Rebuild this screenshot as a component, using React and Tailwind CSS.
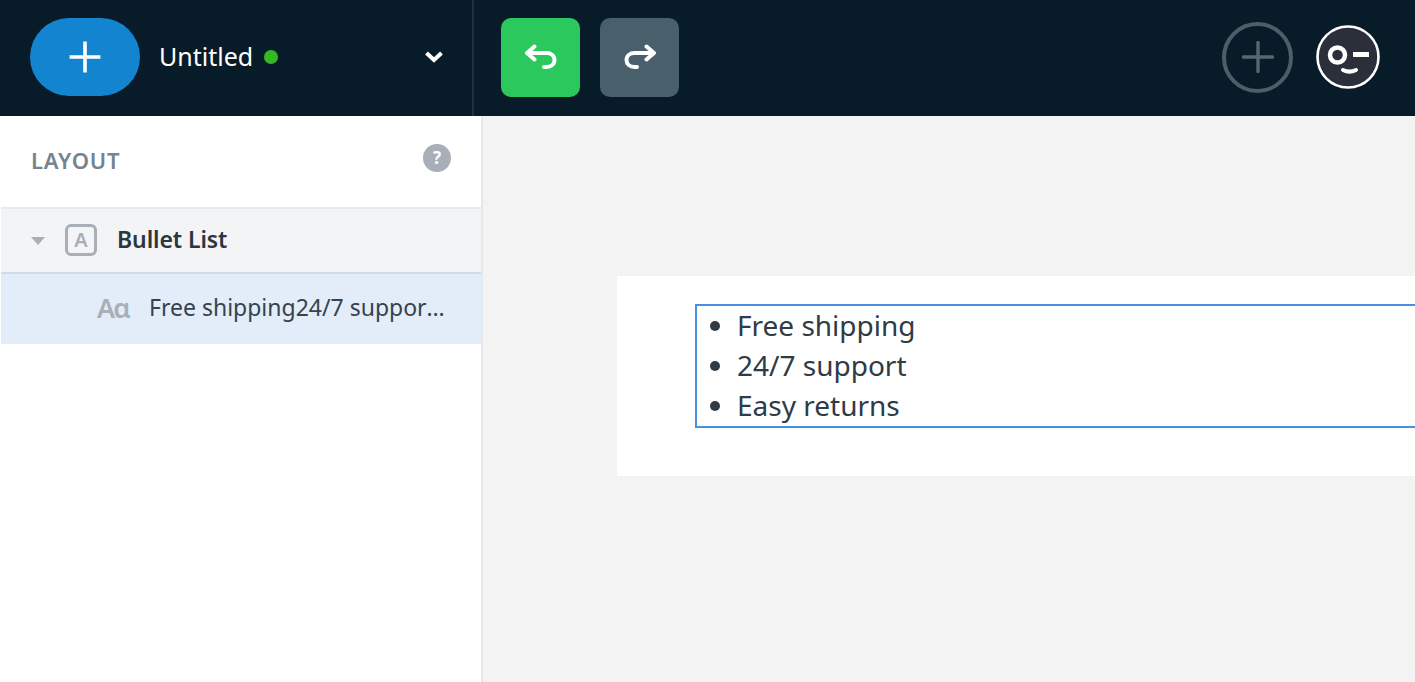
import React from "react";

function PlusIcon({ size = 34, color = "#ffffff", width = 3.4, cap = "butt" }) {
  return (
    <svg width={size} height={size} viewBox="0 0 32 32" fill="none">
      <path d="M16 1.500v29M1.500 16h29" stroke={color} strokeWidth={width} strokeLinecap={cap} />
    </svg>
  );
}

function UndoIcon({ flip }) {
  return (
    <svg
      width="34"
      height="26"
      viewBox="0 0 34 26"
      fill="none"
      className={flip ? "-scale-x-100" : ""}
    >
      <path
        d="M10.500 2.500 3 9l7.500 6.500M3.500 9h19c4.500 0 8 2.800 8 7s-3.500 7-8 7h-2.500"
        stroke="#ffffff"
        strokeWidth="4"
        strokeLinecap="round"
        strokeLinejoin="round"
      />
    </svg>
  );
}

function FaceIcon() {
  return (
    <svg width="64" height="64" viewBox="0 0 64 64" fill="none">
      <circle cx="32" cy="32" r="30.500" fill="#2a2f3a" stroke="#ffffff" strokeWidth="2.600" />
      <circle cx="21.500" cy="30" r="7.500" stroke="#ffffff" strokeWidth="4.500" />
      <path d="M37 29.500h16" stroke="#ffffff" strokeWidth="5" />
      <path d="M27 45c4 2 9 2 13 0" stroke="#ffffff" strokeWidth="4" strokeLinecap="round" />
    </svg>
  );
}

function Header() {
  return (
    <div className="flex h-[116px] items-center bg-[#071c28] pb-[2px]">
      <div className="-mb-[2px] flex h-[116px] w-[474px] items-center border-r-2 border-[#1f323d] pb-[2px] pl-[30px] pr-[29px]">
        <button className="flex h-[78px] w-[110px] items-center justify-center rounded-[39px] bg-[#1384cf]">
          <PlusIcon />
        </button>
        <span className="ml-[19px] -mt-[2px] text-[25px] leading-none text-white">Untitled</span>
        <span className="ml-[11px] h-[14px] w-[14px] rounded-full bg-[#34b924]" />
        <svg className="ml-auto -mr-px" width="20" height="14" viewBox="0 0 20 14" fill="none">
          <path d="M2.500 3 10 10l7.500-7" stroke="#ffffff" strokeWidth="4" />
        </svg>
      </div>
      <div className="ml-[27px] flex gap-5">
        <button className="flex h-[79px] w-[79px] items-center justify-center rounded-[10px] bg-[#2bc85d]">
          <UndoIcon />
        </button>
        <button className="flex h-[79px] w-[79px] items-center justify-center rounded-[10px] bg-[#4a5f6c]">
          <UndoIcon flip />
        </button>
      </div>
      <div className="ml-auto flex items-center gap-[23px] pr-[35px]">
        <div className="flex h-[71px] w-[71px] items-center justify-center rounded-full border-[4px] border-[#4b5f69]">
          <PlusIcon size={32} color="#56686f" width={3.400} cap="round" />
        </div>
        <FaceIcon />
      </div>
    </div>
  );
}

function Sidebar() {
  return (
    <div className="w-[483px] shrink-0 border-r-2 border-[#e6e7e8] bg-white pl-px">
      <div className="flex h-[91px] items-center justify-between pb-[3px] pl-[30px] pr-[30px]">
        <span className="text-[22px] font-semibold tracking-[0.8px] text-[#76848f]">LAYOUT</span>
        <span className="mb-1 flex h-7 w-7 items-center justify-center rounded-full bg-[#a8afb8] text-[17px] font-bold text-white">
          ?
        </span>
      </div>
      <div className="flex h-[67px] items-center border-y-2 border-t-[#e8e9eb] border-b-[#cfdce9] bg-[#f3f4f6] pl-[30px]">
        <svg className="-ml-px mr-px" width="16" height="10" viewBox="0 0 16 10">
          <path d="M1 1h14L8 9z" fill="#a8afb8" />
        </svg>
        <span className="ml-[18px] -mt-[2px] flex h-[32px] w-[32px] items-center justify-center rounded-[6px] border-[3px] border-[#a8afb8] text-[20px] font-semibold leading-none text-[#a8afb8]">
          A
        </span>
        <span className="ml-[20px] -mt-[2px] text-[23px] font-semibold tracking-[-0.1px] text-[#2c3640]">Bullet List</span>
      </div>
      <div className="flex h-[70px] items-center bg-[#e3edf9] pl-[96px]">
        <span className="-mt-[2px] w-[34px] text-[27px] font-semibold tracking-[-2px] text-[#a8afb8]">Aɑ</span>
        <span className="ml-[18px] -mt-[3px] w-[302px] truncate text-[23px] text-[#36424d]">
          Free shipping24/7 supportEasy returns
        </span>
      </div>
    </div>
  );
}

function Canvas() {
  return (
    <div className="flex-1 overflow-hidden bg-[#f3f3f3] pl-[134px] pt-[160px]">
      <div className="h-[200px] bg-white pl-[78px] pt-[28px]">
        <ul className="h-[124px] list-disc border-2 border-r-0 border-[#4a90e2] pl-[40px] text-[28px] leading-[40px] text-[#2f3b45]">
          <li className="-mt-px">Free shipping</li>
          <li>24/7 support</li>
          <li>Easy returns</li>
        </ul>
      </div>
    </div>
  );
}

export default function App() {
  return (
    <div className="flex h-[682px] flex-col overflow-hidden font-['Noto_Sans',sans-serif]">
      <Header />
      <div className="flex min-h-0 flex-1">
        <Sidebar />
        <Canvas />
      </div>
    </div>
  );
}
